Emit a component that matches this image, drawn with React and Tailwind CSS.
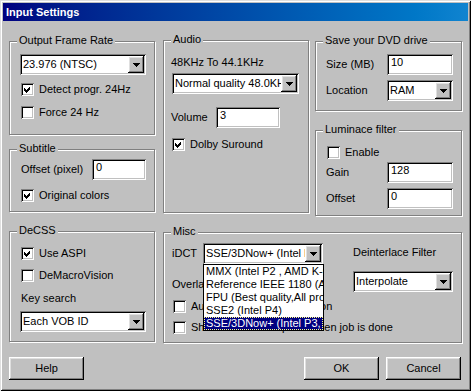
import React from "react";

const sunken =
  "shadow-[inset_1px_1px_0_#808080,inset_-1px_-1px_0_#ffffff,inset_2px_2px_0_#000000,inset_-2px_-2px_0_#c0c0c0]";
const raised =
  "shadow-[inset_-1px_-1px_0_#000000,inset_1px_1px_0_#ffffff,inset_-2px_-2px_0_#808080,inset_2px_2px_0_#dfdfdf]";

function Group({ label, className = "", children }) {
  return (
    <div
      className={`relative border border-[#808080] shadow-[inset_1px_1px_0_#ffffff,1px_1px_0_#ffffff] ${className}`}
    >
      <span className="absolute left-[7px] -top-[8px] bg-[#c0c0c0] px-[2px] leading-[13px] whitespace-nowrap">
        {label}
      </span>
      {children}
    </div>
  );
}

function Arrow() {
  return (
    <svg width="7" height="4" viewBox="0 0 7 4" shapeRendering="crispEdges">
      <polygon points="0,0 7,0 4,4 3,4" fill="#000" />
    </svg>
  );
}

function Combo({ value, className = "" }) {
  return (
    <div className={`h-[21px] bg-white ${sunken} flex items-center p-[2px] ${className}`}>
      <span className="flex-1 overflow-hidden whitespace-nowrap pl-[1px]">{value}</span>
      <span
        className={`w-[16px] h-[17px] shrink-0 bg-[#c0c0c0] ${raised} flex items-center justify-center`}
      >
        <Arrow />
      </span>
    </div>
  );
}

function Field({ value, className = "" }) {
  return (
    <div className={`h-[21px] bg-white ${sunken} pl-[4px] pt-[2px] ${className}`}>{value}</div>
  );
}

function Check({ checked, label, className = "" }) {
  return (
    <div className={`flex items-center h-[13px] ${className}`}>
      <span className={`relative w-[13px] h-[13px] shrink-0 bg-white ${sunken}`}>
        {checked && (
          <svg
            className="absolute left-0 top-0"
            width="13"
            height="13"
            viewBox="0 0 13 13"
            shapeRendering="crispEdges"
          >
            <polygon points="3,5 5,7 9,3 9,6 5,10 3,8" fill="#000" />
          </svg>
        )}
      </span>
      <span className="ml-[5px] whitespace-nowrap">{label}</span>
    </div>
  );
}

function Button({ children, className = "" }) {
  return (
    <div
      className={`w-[75px] h-[23px] bg-[#c0c0c0] ${raised} flex items-center justify-center ${className}`}
    >
      {children}
    </div>
  );
}

const idctOptions = [
  "MMX (Intel P2 , AMD K-6/K-7)",
  "Reference IEEE 1180 (All processors)",
  "FPU (Best quality,All processors)",
  "SSE2 (Intel P4)",
  "SSE/3DNow+ (Intel P3, AMD Athlon)",
];

export default function App() {
  return (
    <div className="w-[471px] h-[391px] overflow-hidden flex flex-col bg-[#c0c0c0] text-black text-[11px] leading-[13px] font-['Liberation_Sans',Arial,sans-serif] shadow-[inset_1px_1px_0_#dfdfdf,inset_-1px_-1px_0_#000000,inset_2px_2px_0_#ffffff,inset_-2px_-2px_0_#808080]">
      {/* Title bar */}
      <div className="mx-[3px] mt-[3px] h-[18px] flex items-center pl-[3px] bg-linear-to-r from-[#000080] to-[#1084d0] text-white font-bold">
        Input Settings
      </div>

      <div className="flex pl-[9px] pt-[19px]">
        {/* Left column */}
        <div className="w-[146px] flex flex-col">
          <Group label="Output Frame Rate" className="mt-[1px] h-[94px] pt-[12px] pl-[10px]">
            <Combo value="23.976 (NTSC)" className="w-[126px]" />
            <Check checked label="Detect progr. 24Hz" className="mt-[8px] ml-[1px]" />
            <Check label="Force 24 Hz" className="mt-[10px] ml-[1px]" />
          </Group>

          <Group label="Subtitle" className="mt-[14px] h-[63px] pt-[9px] pl-[11px]">
            <div className="flex items-center">
              <span className="w-[71px]">Offset (pixel)</span>
              <Field value="0" className="w-[54px]" />
            </div>
            <Check checked label="Original colors" className="mt-[9px]" />
          </Group>

          <Group label="DeCSS" className="mt-[19px] h-[111px] pt-[15px] pl-[10px]">
            <Check checked label="Use ASPI" className="ml-[1px]" />
            <Check label="DeMacroVision" className="mt-[9px] ml-[1px]" />
            <div className="mt-[10px] ml-[1px]">Key search</div>
            <Combo value="Each VOB ID" className="mt-[6px] w-[126px]" />
          </Group>
        </div>

        {/* Right part */}
        <div className="ml-[8px] w-[299px] flex flex-col">
          <div className="flex items-start">
            <Group label="Audio" className="w-[146px] h-[173px] pt-[15px] pl-[7px]">
              <div>48KHz To 44.1KHz</div>
              <Combo value="Normal quality 48.0KHz" className="mt-[4px] ml-[1px] w-[127px]" />
              <div className="mt-[13px] flex items-center">
                <span className="w-[45px]">Volume</span>
                <Field value="3" className="w-[64px]" />
              </div>
              <Check checked label="Dolby Suround" className="mt-[10px] ml-[1px]" />
            </Group>

            <div className="ml-[6px] w-[147px] flex flex-col">
              <Group label="Save your DVD drive" className="mt-[1px] h-[70px] pt-[12px] pl-[10px]">
                <div className="flex items-center">
                  <span className="w-[61px]">Size (MB)</span>
                  <Field value="10" className="w-[66px]" />
                </div>
                <div className="mt-[5px] flex items-center">
                  <span className="w-[61px]">Location</span>
                  <Combo value="RAM" className="w-[66px]" />
                </div>
              </Group>

              <Group label="Luminace filter" className="mt-[19px] h-[86px] pt-[15px] pl-[10px]">
                <Check label="Enable" className="ml-[1px]" />
                <div className="mt-[3px] flex items-center">
                  <span className="w-[61px]">Gain</span>
                  <Field value="128" className="w-[66px]" />
                </div>
                <div className="mt-[5px] flex items-center">
                  <span className="w-[61px]">Offset</span>
                  <Field value="0" className="w-[66px]" />
                </div>
              </Group>
            </div>
          </div>

          <Group label="Misc" className="mt-[16px] h-[111px] flex">
            <div className="w-[189px] pl-[8px] pt-[10px] flex flex-col">
              <div className="flex items-center">
                <span className="w-[31px]">iDCT</span>
                <Combo value="SSE/3DNow+ (Intel P3, AMD Athlon)" className="w-[120px]" />
              </div>
              <div className="mt-[14px]">Overlay</div>
              <Check label="Automatic interlace detection" className="mt-[9px] ml-[1px]" />
              <Check label="Shutdown the computer when job is done" className="mt-[8px] ml-[1px]" />
            </div>
            <div className="pt-[13px] flex flex-col">
              <div>Deinterlace Filter</div>
              <Combo value="Interpolate" className="mt-[12px] w-[100px]" />
            </div>

            {/* Open iDCT list */}
            <div className="absolute left-[39px] top-[31px] z-10 w-[121px] bg-white border border-black">
              {idctOptions.map((opt, i) => (
                <div
                  key={opt}
                  className={
                    i === idctOptions.length - 1
                      ? "h-[13px] px-[2px] whitespace-nowrap overflow-hidden bg-[#000080] text-white outline-1 outline-dotted outline-[#ffff80] -outline-offset-1"
                      : "h-[13px] px-[2px] whitespace-nowrap overflow-hidden"
                  }
                >
                  {opt}
                </div>
              ))}
            </div>
          </Group>
        </div>
      </div>

      {/* Buttons */}
      <div className="mt-[14px] flex pl-[9px] pr-[10px]">
        <Button>Help</Button>
        <div className="ml-auto flex gap-[7px]">
          <Button>OK</Button>
          <Button>Cancel</Button>
        </div>
      </div>
    </div>
  );
}
